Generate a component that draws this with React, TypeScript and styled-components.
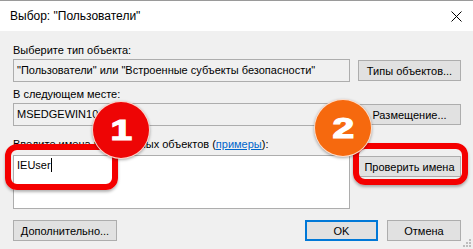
import styled, { createGlobalStyle } from "styled-components";

/* ─────────────── dialog ─────────────── */

export default function App() {
  return (
    <>
      <GlobalStyle />
      <Window>
        <TitleBar>
          <Title>Выбор: "Пользователи"</Title>
          <CloseButton aria-label="close">
            <svg width="11" height="11" viewBox="0 0 11 11">
              <path d="M0.5 0.5 L10.5 10.5 M10.5 0.5 L0.5 10.5" stroke="#000" strokeWidth="1" fill="none" />
            </svg>
          </CloseButton>
        </TitleBar>

        <Body>
          <FieldLabel top={12}>Выберите тип объекта:</FieldLabel>
          <Row>
            <ReadOnlyField>"Пользователи" или "Встроенные субъекты безопасности"</ReadOnlyField>
            <Button>Типы объектов...</Button>
          </Row>

          <FieldLabel top={5}>В следующем месте:</FieldLabel>
          <Row>
            <ReadOnlyField>MSEDGEWIN10</ReadOnlyField>
            <Button>Размещение...</Button>
          </Row>

          <FieldLabel top={11}>
            Введите имена выбираемых объектов (<Link href="#">примеры</Link>):
          </FieldLabel>
          <Row top={3} align="start">
            <NamesBox>
              IEUser<Caret />
            </NamesBox>
            <Button offset={1}>Проверить имена</Button>
          </Row>

          <Footer>
            <Button width={104}>Дополнительно...</Button>
            <FooterRight>
              <Button width={73} primary>OK</Button>
              <Button width={74}>Отмена</Button>
            </FooterRight>
          </Footer>
        </Body>

        <Grip width="8" height="8" viewBox="0 0 8 8">
          {[
            [6, 0],
            [6, 3],
            [3, 3],
            [6, 6],
            [3, 6],
            [0, 6],
          ].map(([x, y]) => (
            <rect key={`${x}-${y}`} x={x} y={y} width="2" height="2" fill="#bdbdbd" />
          ))}
        </Grip>

        {/* annotations */}
        <Frame style={{ left: 5, top: 143, width: 113, height: 46 }} />
        <Frame style={{ left: 353, top: 142, width: 115, height: 42 }} />
        <Badge color="#ee0505" style={{ left: 92, top: 100 }}>
          <Digit>1</Digit>
        </Badge>
        <Badge color="#f6690e" style={{ left: 314, top: 98 }}>
          <Digit>2</Digit>
        </Badge>
      </Window>
    </>
  );
}

/* ─────────────── styled components ─────────────── */

const GlobalStyle = createGlobalStyle`
  html, body {
    margin: 0;
    padding: 0;
    background: #f0f0f0;
  }
  body {
    font-family: "Liberation Sans", Arial, sans-serif;
    font-size: 11px;
    color: #000;
  }
`;

const Window = styled.div`
  position: relative;
  width: 473px;
  height: 249px;
  overflow: hidden;
  background: #f0f0f0;
  border-top: 1px solid #9a9a9a;
  box-sizing: border-box;
`;

const TitleBar = styled.div`
  display: flex;
  align-items: center;
  justify-content: space-between;
  height: 30px;
  background: #fff;
  padding: 0 10px 0 10px;
`;

const Title = styled.span`
  font-size: 12px;
  line-height: 15px;
`;

const CloseButton = styled.span`
  display: flex;
  align-items: center;
  margin-right: 1px;
`;

const Body = styled.div`
  display: flex;
  flex-direction: column;
  padding: 0 12px 0 13px;
`;

const FieldLabel = styled.div<{ top: number }>`
  margin-top: ${(p) => p.top}px;
  height: 15px;
  line-height: 15px;
  white-space: nowrap;
`;

const Row = styled.div<{ top?: number; align?: string }>`
  display: grid;
  grid-template-columns: 337px 103px;
  column-gap: 8px;
  align-items: ${(p) => p.align ?? "center"};
  margin-top: ${(p) => p.top ?? 1}px;
`;

const ReadOnlyField = styled.div`
  box-sizing: border-box;
  height: 23px;
  line-height: 21px;
  padding-left: 3px;
  border: 1px solid #adadad;
  background: #f0f0f0;
  white-space: nowrap;
  overflow: hidden;
`;

const NamesBox = styled.div`
  box-sizing: border-box;
  height: 54px;
  padding: 2px 3px;
  line-height: 15px;
  border: 1px solid #adadad;
  background: #fff;
`;

const Caret = styled.span`
  display: inline-block;
  width: 1px;
  height: 14px;
  background: #000;
  vertical-align: -3px;
`;

const Link = styled.a`
  color: #0066cc;
  text-decoration: underline;
`;

const Button = styled.button<{ width?: number; primary?: boolean; offset?: number }>`
  box-sizing: border-box;
  width: ${(p) => (p.width ? `${p.width}px` : "100%")};
  height: 21px;
  margin-top: ${(p) => p.offset ?? 0}px;
  padding: 0;
  font-family: inherit;
  font-size: 11px;
  color: #000;
  background: #e1e1e1;
  border: 1px solid ${(p) => (p.primary ? "#0078d7" : "#adadad")};
  box-shadow: ${(p) => (p.primary ? "inset 0 0 0 1px #0078d7" : "none")};
  white-space: nowrap;
`;

const Footer = styled.div`
  display: flex;
  justify-content: space-between;
  align-items: center;
  margin-top: 11px;
`;

const FooterRight = styled.div`
  display: flex;
  gap: 9px;
`;

const Grip = styled.svg`
  position: absolute;
  right: 2px;
  bottom: 2px;
`;

const Frame = styled.div`
  position: absolute;
  box-sizing: border-box;
  border: 6px solid #f40000;
  border-radius: 12px;
  box-shadow: 0 2px 3px rgba(0, 0, 0, 0.3);
`;

const Badge = styled.div<{ color: string }>`
  position: absolute;
  box-sizing: border-box;
  width: 58px;
  height: 58px;
  border-radius: 50%;
  background: ${(p) => p.color};
  border: 1.5px solid rgba(255, 235, 225, 0.9);
  box-shadow: 0 1px 3px rgba(0, 0, 0, 0.35);
  display: flex;
  align-items: center;
  justify-content: center;
`;

const Digit = styled.span`
  font-family: "Liberation Sans", Arial, sans-serif;
  font-weight: 700;
  font-size: 30px;
  line-height: 1;
  color: #fff;
  transform: scaleX(1.3);
  -webkit-text-stroke: 1.2px #fff;
`;
